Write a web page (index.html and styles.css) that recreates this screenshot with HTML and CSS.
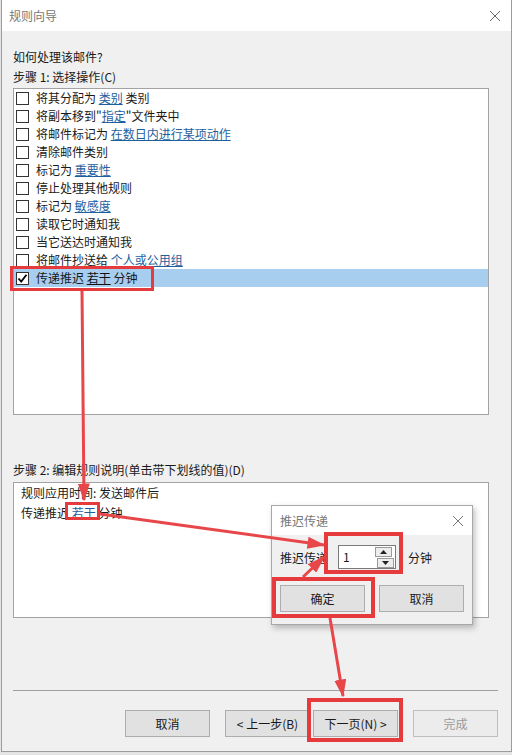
FILE: index.html
```html
<!DOCTYPE html>
<html lang="zh-CN">
<head>
    <meta charset="UTF-8">
    <title>规则向导</title>
    <link rel="stylesheet" href="styles.css">
</head>
<body>
    <div class="window">
        <div class="titlebar">
            <span class="title">规则向导</span>
            <svg class="close" width="12" height="12" viewBox="0 0 12 12"><path d="M1 1L11 11M11 1L1 11" stroke="#666" stroke-width="1"/></svg>
        </div>
        <div class="content">
            <p class="label">如何处理该邮件?</p>
            <p class="label">步骤 1: 选择操作(C)</p>
            <ul class="actions">
                <li><span class="check"></span>将其分配为 <a>类别</a> 类别</li>
                <li><span class="check"></span>将副本移到"<a>指定</a>"文件夹中</li>
                <li><span class="check"></span>将邮件标记为 <a>在数日内进行某项动作</a></li>
                <li><span class="check"></span>清除邮件类别</li>
                <li><span class="check"></span>标记为 <a>重要性</a></li>
                <li><span class="check"></span>停止处理其他规则</li>
                <li><span class="check"></span>标记为 <a>敏感度</a></li>
                <li><span class="check"></span>读取它时通知我</li>
                <li><span class="check"></span>当它送达时通知我</li>
                <li><span class="check"></span>将邮件抄送给 <a>个人或公用组</a></li>
                <li class="selected"><span class="check checked"><svg width="11" height="11" viewBox="0 0 11 11"><path d="M1.5 5.5L4.2 8.5L9.5 1.8" stroke="#000" stroke-width="1.8" fill="none"/></svg></span>传递推迟 <a>若干</a> 分钟</li>
            </ul>
            <p class="label step2">步骤 2: 编辑规则说明(单击带下划线的值)(D)</p>
            <div class="desc">
                <div>规则应用时间: 发送邮件后</div>
                <div>传递推迟 <a class="hl">若干</a> 分钟</div>
            </div>
        </div>
        <div class="footer">
            <div class="sep"></div>
            <div class="buttons">
                <button class="btn">取消</button>
                <div class="pair">
                    <button class="btn">&lt; 上一步(B)</button>
                    <button class="btn">下一页(N) &gt;</button>
                </div>
                <button class="btn disabled">完成</button>
            </div>
        </div>
    </div>

    <div class="popup">
        <div class="popup-title">
            <span class="title">推迟传递</span>
            <svg class="close" width="12" height="12" viewBox="0 0 12 12"><path d="M1 1L11 11M11 1L1 11" stroke="#777" stroke-width="1"/></svg>
        </div>
        <div class="popup-body">
            <div class="popup-row">
                <span>推迟传递</span>
                <div class="spinner">
                    <span class="value">1</span>
                    <div class="spin">
                        <span class="up"><svg width="7" height="4" viewBox="0 0 7 4"><path d="M0 4L3.5 0L7 4Z" fill="#222"/></svg></span>
                        <span class="down"><svg width="7" height="4" viewBox="0 0 7 4"><path d="M0 0L3.5 4L7 0Z" fill="#222"/></svg></span>
                    </div>
                </div>
                <span>分钟</span>
            </div>
            <div class="popup-buttons">
                <button class="btn">确定</button>
                <button class="btn">取消</button>
            </div>
        </div>
    </div>

    <!-- 标注: 红框和箭头 -->
    <svg class="marks" width="512" height="755" viewBox="0 0 512 755">
        <defs>
            <marker id="head" markerWidth="6" markerHeight="4" refX="5.5" refY="2" orient="auto" markerUnits="strokeWidth">
                <path d="M0 0L6 2L0 4Z" fill="#e8474a"/>
            </marker>
        </defs>
        <g fill="none" stroke="#e53b3d">
            <rect x="11.5" y="267.5" width="141" height="22" stroke-width="3"/>
            <rect x="66.5" y="503.5" width="32" height="15" stroke-width="3"/>
            <rect x="326" y="534" width="75" height="38" stroke-width="4"/>
            <rect x="274" y="579" width="99" height="37" stroke-width="4"/>
            <rect x="309" y="700" width="92" height="40" stroke-width="4"/>
        </g>
        <g stroke="#e8474a" stroke-width="3" marker-end="url(#head)">
            <line x1="82" y1="291" x2="84" y2="500"/>
            <line x1="100" y1="514" x2="324" y2="545"/>
            <line x1="303" y1="577" x2="324" y2="557"/>
            <line x1="330" y1="618" x2="343" y2="696"/>
        </g>
    </svg>
</body>
</html>
```
FILE: styles.css
```css
body { margin: 0; padding-left: 1px; background: #e4e4e4; font-family: "Noto Sans CJK SC", sans-serif; font-size: 12px; color: #1a1a1a; }
p { margin: 0; }
a { color: #1f5f9e; text-decoration: underline; }

.window { width: 511px; height: 752px; box-sizing: border-box; border: 1px solid #9c9c9c; border-top: none; background: #f0f0f0; display: flex; flex-direction: column; }
.titlebar { height: 31px; background: #fff; display: flex; align-items: center; justify-content: space-between; padding: 0 10px 0 7px; }
.title { color: #777; font-size: 12px; }
.close { display: block; }

.content { padding: 17px 11px 0 11px; }
.label { line-height: 18px; height: 18px; margin-bottom: 2px; }
.step2 { margin-top: 46px; }

.actions { list-style: none; margin: 2px 0 0; padding: 0; width: 476px; height: 327px; box-sizing: border-box; border: 1px solid #a3a3a3; background: #fff; }
.actions li { height: 18px; line-height: 18px; display: flex; align-items: center; padding-left: 2px; white-space: pre; }
.actions li.selected { background: #a7cdef; }
.actions li.selected a { color: #111; }
.check { width: 11px; height: 11px; border: 1px solid #333; background: #fff; margin-right: 7px; display: flex; align-items: center; justify-content: center; }
.check svg { display: block; }

.desc { margin-top: 3px; width: 476px; height: 136px; box-sizing: border-box; border: 1px solid #a3a3a3; background: #fff; padding: 0 7px; line-height: 20px; }
.desc a.hl { color: #1f5f9e; text-decoration: underline; }

.footer { margin-top: auto; padding: 0 13px 14px 11px; }
.sep { height: 1px; background: #a0a0a0; }
.buttons { display: flex; justify-content: flex-end; gap: 15px; margin-top: 19px; }
.pair { display: flex; gap: 3px; }
.btn { width: 85px; height: 27px; box-sizing: border-box; background: #e1e1e1; border: 1px solid #adadad; font-family: "Noto Sans CJK SC", sans-serif; font-size: 12px; color: #1a1a1a; padding: 0; }
.btn.disabled { background: #ececec; border-color: #bfbfbf; color: #9a9a9a; }

.popup { position: absolute; left: 271px; top: 505px; width: 202px; height: 120px; box-sizing: border-box; border: 1px solid #a8a8a8; background: #f0f0f0; box-shadow: 2px 3px 6px rgba(0, 0, 0, 0.25); }
.popup-title { height: 29px; background: #fff; display: flex; align-items: center; justify-content: space-between; padding: 0 8px 0 8px; }
.popup-body { padding: 10px 7px 0 8px; }
.popup-row { display: flex; align-items: center; gap: 10px; height: 24px; }
.spinner { width: 58px; height: 24px; box-sizing: border-box; border: 1px solid #7a7a7a; background: #fff; display: flex; align-items: center; justify-content: space-between; padding: 2px 1px 2px 4px; }
.spinner .value { line-height: 18px; }
.spin { display: flex; flex-direction: column; gap: 1px; }
.spin span { width: 15px; height: 8px; border: 1px solid #9a9a9a; background: #ededed; display: flex; align-items: center; justify-content: center; }
.spin svg { display: block; }
.popup-row span:last-child { margin-left: 2px; }
.popup-buttons { display: flex; gap: 14px; margin-top: 16px; }

.marks { position: absolute; left: 0; top: 0; pointer-events: none; }
```
